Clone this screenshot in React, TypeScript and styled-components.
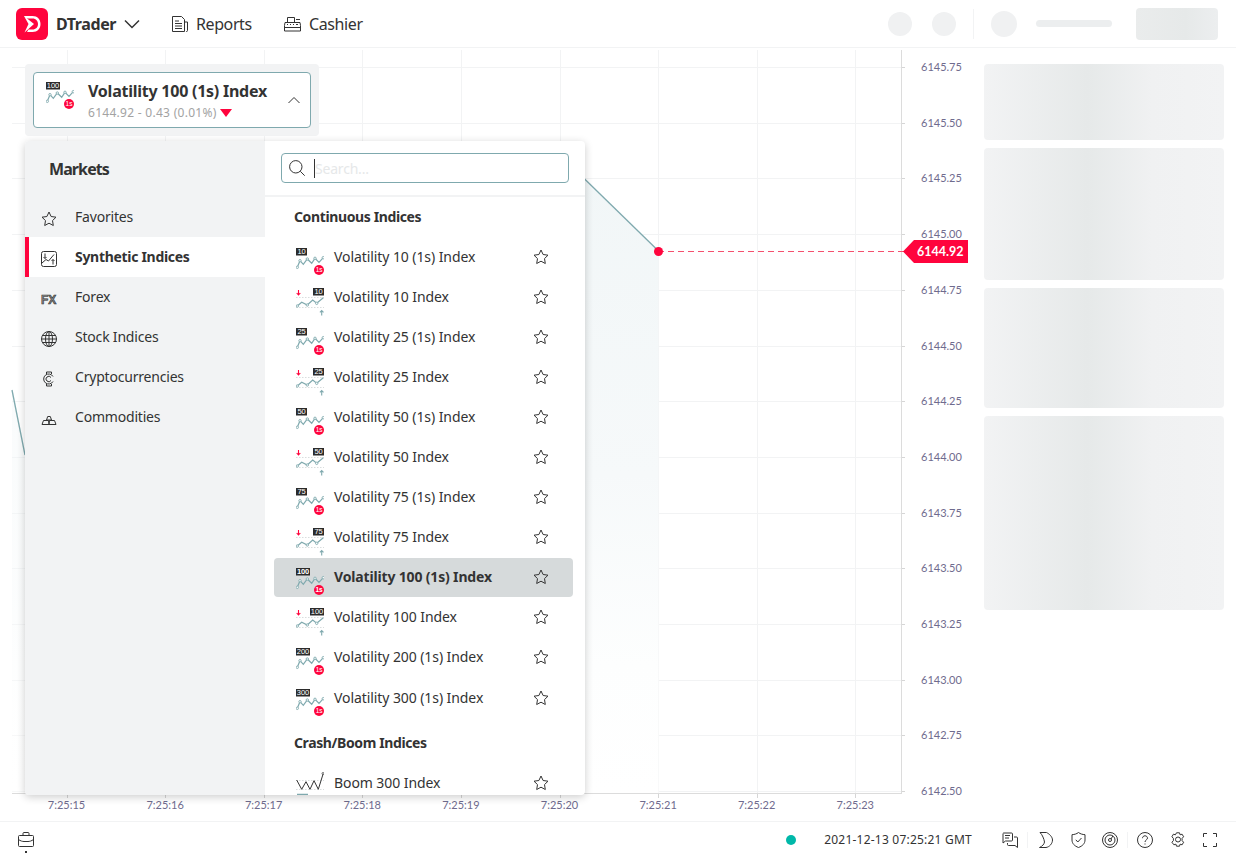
import { type ReactElement } from 'react';
import styled, { createGlobalStyle } from 'styled-components';

const RED = '#ff043d';
const TEAL = '#7fa9ae';
const INK = '#333333';
const FONT = '"Noto Sans", "Liberation Sans", sans-serif';

const GlobalStyle = createGlobalStyle`
  html, body {
    margin: 0;
    padding: 0;
    background: #fff;
    color: ${INK};
    font-family: ${FONT};
  }
  * { box-sizing: border-box; }
`;

const Page = styled.div`
  width: 1236px;
  height: 857px;
  display: flex;
  flex-direction: column;
  overflow: hidden;
`;

const Header = styled.header`
  height: 48px;
  flex: none;
  display: flex;
  align-items: center;
  padding: 0 18px 0 16px;
  border-bottom: 1px solid #f2f3f4;
`;

const Brand = styled.div`
  display: flex;
  align-items: center;
  width: 156px;
  font-size: 16px;
  font-weight: 700;
  letter-spacing: -0.4px;
  gap: 8px;
`;

const NavLink = styled.div<{ $width: number }>`
  display: flex;
  align-items: center;
  gap: 8px;
  width: ${(p) => p.$width}px;
  font-size: 16px;
  letter-spacing: -0.4px;
`;

const HeaderRight = styled.div`
  margin-left: auto;
  display: flex;
  align-items: center;
`;

const SkeletonDot = styled.div<{ $size: number; $gap: number }>`
  width: ${(p) => p.$size}px;
  height: ${(p) => p.$size}px;
  margin-right: ${(p) => p.$gap}px;
  border-radius: 50%;
  background: #f0f1f2;
`;

const HeaderDivider = styled.div`
  width: 1px;
  height: 30px;
  margin-right: 17px;
  background: #f2f3f4;
`;

const SkeletonBar = styled.div`
  width: 76px;
  height: 7px;
  margin-right: 24px;
  border-radius: 4px;
  background: #eceeef;
`;

const SkeletonButton = styled.div`
  width: 82px;
  height: 32px;
  border-radius: 4px;
  background: linear-gradient(90deg, #eaecec 0%, #e6e9e9 60%, #eceeef 100%);
`;

const Main = styled.main`
  flex: 1;
  min-height: 0;
  display: flex;
`;

const ChartArea = styled.section`
  position: relative;
  width: 968px;
  flex: none;
`;

const ChartSvg = styled.svg`
  display: block;
  font-family: Lato, "Liberation Sans", sans-serif;
`;

const Side = styled.aside`
  flex: 1;
  display: flex;
  flex-direction: column;
  gap: 8px;
  padding: 16px 12px 0 16px;
`;

const SkeletonCard = styled.div<{ $height: number }>`
  height: ${(p) => p.$height}px;
  border-radius: 4px;
  background: linear-gradient(90deg, #f2f3f4 0%, #e6e9e9 43%, #f0f1f2 70%, #f2f3f4 100%);
`;

const Selector = styled.div`
  position: absolute;
  left: 25px;
  top: 16px;
  width: 294px;
  height: 72px;
  padding: 8px;
  border-radius: 4px;
  background: #f2f3f4;
`;

const SelectorBox = styled.div`
  height: 56px;
  display: flex;
  align-items: flex-start;
  gap: 14px;
  padding: 0 10px 0 12px;
  background: #fff;
  border: 1px solid ${TEAL};
  border-radius: 4px;

  & > svg:first-child {
    margin-top: -1px;
  }
`;

const SelectorText = styled.div`
  margin-top: 6px;
`;

const SelectorTitle = styled.div`
  font-size: 16px;
  line-height: 24px;
  font-weight: 700;
  letter-spacing: -0.24px;
  white-space: nowrap;
`;

const SelectorSub = styled.div`
  display: flex;
  align-items: center;
  gap: 3px;
  margin-top: 1px;
  font-size: 12px;
  line-height: 18px;
  letter-spacing: 0.28px;
  color: #a3a3a3;
`;

const DownTriangle = styled.span`
  width: 0;
  height: 0;
  border-left: 6px solid transparent;
  border-right: 6px solid transparent;
  border-top: 8px solid ${RED};
`;

const Chevron = styled.svg`
  margin-left: auto;
  align-self: center;
`;

const Menu = styled.div`
  position: absolute;
  left: 25px;
  top: 93px;
  width: 560px;
  height: 654px;
  display: flex;
  border-radius: 4px;
  overflow: hidden;
  background: #fff;
  box-shadow: 0 2px 8px rgba(0, 0, 0, 0.2);
`;

const Sidebar = styled.nav`
  width: 240px;
  flex: none;
  background: #f2f3f4;
`;

const SidebarTitle = styled.div`
  height: 56px;
  padding: 16px 24px 0;
  font-size: 16px;
  line-height: 24px;
  font-weight: 700;
  letter-spacing: -0.9px;
`;

const SidebarItem = styled.div<{ $active?: boolean }>`
  height: 40px;
  display: flex;
  align-items: center;
  gap: 18px;
  padding-bottom: 1px;
  padding-left: ${(p) => (p.$active ? 12 : 16)}px;
  font-size: 14px;
  font-weight: ${(p) => (p.$active ? 700 : 400)};
  letter-spacing: ${(p) => (p.$active ? -0.3 : -0.2)}px;
  background: ${(p) => (p.$active ? '#fff' : 'transparent')};
  border-left: ${(p) => (p.$active ? `4px solid ${RED}` : 'none')};

  & > svg {
    margin-top: 4px;
  }
`;

const ListPanel = styled.div`
  flex: 1;
  min-width: 0;
  display: flex;
  flex-direction: column;
`;

const SearchWrap = styled.div`
  flex: none;
  padding: 12px 16px;
  border-bottom: 2px solid #f2f3f4;
`;

const SearchBox = styled.div`
  height: 30px;
  display: flex;
  align-items: center;
  gap: 9px;
  padding-left: 7px;
  border: 1px solid ${TEAL};
  border-radius: 4px;
`;

const Caret = styled.span`
  width: 1px;
  height: 19px;
  background: ${INK};
`;

const Placeholder = styled.span`
  margin-left: -9px;
  font-size: 14px;
  letter-spacing: -0.2px;
  color: #e6e8e9;
`;

const List = styled.div`
  flex: 1;
  min-height: 0;
  overflow: hidden;
  padding-left: 9px;
`;

const GroupTitle = styled.div<{ $top?: number; $height: number }>`
  height: ${(p) => p.$height}px;
  margin-top: ${(p) => p.$top ?? 0}px;
  padding-left: 20px;
  font-size: 14px;
  line-height: 40px;
  font-weight: 700;
  letter-spacing: -0.38px;
`;

const Row = styled.div<{ $selected?: boolean; $nudge?: boolean }>`
  width: 299px;
  height: 39px;
  margin-bottom: 1px;
  margin-top: ${(p) => (p.$nudge ? 2 : 0)}px;
  display: flex;
  align-items: center;
  gap: 10px;
  padding-left: 22px;
  padding-bottom: 2px;
  font-size: 14px;
  font-weight: ${(p) => (p.$selected ? 700 : 400)};
  letter-spacing: ${(p) => (p.$selected ? -0.16 : -0.08)}px;
  border-radius: 4px;
  background: ${(p) => (p.$selected ? '#d6dadb' : 'transparent')};
`;

const RowLabel = styled.span`
  flex: 1;
  white-space: nowrap;
`;

const RowStar = styled.svg`
  flex: none;
  margin-right: 24px;
`;

const Footer = styled.footer`
  height: 36px;
  flex: none;
  display: flex;
  align-items: center;
  padding: 0 19px 0 18px;
  border-top: 1px solid #f2f3f4;
`;

const FooterLeft = styled.div`
  position: relative;
  display: flex;
`;

const Pip = styled.span`
  position: absolute;
  left: 7px;
  top: 19px;
  width: 2px;
  height: 2px;
  background: ${INK};
`;

const Status = styled.div`
  margin-left: auto;
  display: flex;
  align-items: center;
  gap: 28px;
  margin-right: 30px;
  font-size: 12px;
  letter-spacing: 0.22px;
`;

const StatusDot = styled.span`
  width: 10px;
  height: 10px;
  border-radius: 50%;
  background: #00b8a9;
`;

const FooterIcons = styled.div`
  display: flex;
  align-items: center;
`;

const FooterIcon = styled.svg<{ $gap: number }>`
  margin-right: ${(p) => p.$gap}px;
`;

const FooterDivider = styled.span<{ $gap: number }>`
  width: 1px;
  height: 16px;
  margin-right: ${(p) => p.$gap}px;
  background: #f2f3f4;
`;

function StarIcon(): ReactElement {
  return (
    <RowStar width='16' height='16' viewBox='0 0 16 16' fill='none' stroke={INK} strokeWidth='1'>
      <path d='M8 1l2.100 4.500 4.900.7-3.500 3.400.8 4.900L8 12.200l-4.300 2.300.8-4.900L1 6.200l4.900-.7z' strokeLinejoin='round' />
    </RowStar>
  );
}

function MarketIcon({ label, fast }: { label: string; fast: boolean }): ReactElement {
  const wide = label.length > 2;
  const boxW = wide ? 14 : 11;
  const labelFont = '"Liberation Sans", sans-serif';
  if (fast) {
    const pts: number[][] = [[1.3, 29.3], [4, 22.7], [7.3, 26.3], [11.3, 21], [15.7, 25.3], [19, 20.3], [23, 24.3], [27.3, 19.7]];
    return (
      <svg width='28' height='38' viewBox='0 0 28 38' fill='none'>
        <rect x='0' y='10' width={boxW} height='7.500' fill='#2b2b2b' />
        <text x={boxW / 2} y='16.200' textAnchor='middle' fontSize='7.500' fill='#fff' fontFamily={labelFont}>{label}</text>
        <polyline points={pts.map((p) => p.join(',')).join(' ')} stroke={TEAL} strokeWidth='1.200' />
        {pts.filter((_, i) => i === 0 || i % 2 === 1).map((p) => (
          <circle key={p[0]} cx={p[0]} cy={p[1]} r='1.200' fill='#fff' stroke={TEAL} strokeWidth='0.900' />
        ))}
        <circle cx='23' cy='32' r='5' fill={RED} />
        <text x='23' y='34.400' textAnchor='middle' fontSize='6.500' fill='#fff' fontFamily={labelFont}>1s</text>
      </svg>
    );
  }
  const pts: number[][] = [[1.3, 28], [5.7, 24.3], [11.3, 27], [16.7, 22], [20.7, 25.3], [27.3, 19.7]];
  return (
    <svg width='28' height='38' viewBox='0 0 28 38' fill='none'>
      <rect x={28 - boxW} y='10' width={boxW} height='7.500' fill='#2b2b2b' />
      <text x={28 - boxW / 2} y='16.200' textAnchor='middle' fontSize='7.500' fill='#fff' fontFamily={labelFont}>{label}</text>
      <path d='M2.500 12v5M.7 15l1.800 2 1.800-2' stroke={RED} strokeWidth='1.100' />
      <path d='M0 19.500h28M0 29.500h28' stroke='#c8cfd0' strokeWidth='0.700' strokeDasharray='1.500 1.500' />
      <polyline points={pts.map((p) => p.join(',')).join(' ')} stroke={TEAL} strokeWidth='1.200' />
      {pts.filter((_, i) => i % 2 === 0).map((p) => (
        <circle key={p[0]} cx={p[0]} cy={p[1]} r='1.200' fill='#fff' stroke={TEAL} strokeWidth='0.900' />
      ))}
      <path d='M25.700 32.500v5M23.900 34.300l1.800-1.800 1.800 1.800' stroke={TEAL} strokeWidth='1.100' />
    </svg>
  );
}

function BoomIcon(): ReactElement {
  return (
    <svg width='28' height='38' viewBox='0 0 28 38' fill='none'>
      <path d='M0 16.500h28M0 25.500h28' stroke='#c8cfd0' strokeWidth='0.700' strokeDasharray='1.500 1.500' />
      <polyline points='.7,16 5.700,25.300 10,17.700 14,25.300 18,16.700 22.300,25.300 27.300,9.300' stroke={INK} strokeWidth='1' />
      <circle cx='27' cy='9.500' r='1' fill='#fff' stroke={INK} strokeWidth='0.700' />
      <path d='M1 30.500h11' stroke={TEAL} strokeWidth='1.500' />
    </svg>
  );
}

const markets: { label: string; name: string; fast: boolean; selected?: boolean }[] = [
  { label: '10', name: 'Volatility 10 (1s) Index', fast: true },
  { label: '10', name: 'Volatility 10 Index', fast: false },
  { label: '25', name: 'Volatility 25 (1s) Index', fast: true },
  { label: '25', name: 'Volatility 25 Index', fast: false },
  { label: '50', name: 'Volatility 50 (1s) Index', fast: true },
  { label: '50', name: 'Volatility 50 Index', fast: false },
  { label: '75', name: 'Volatility 75 (1s) Index', fast: true },
  { label: '75', name: 'Volatility 75 Index', fast: false },
  { label: '100', name: 'Volatility 100 (1s) Index', fast: true, selected: true },
  { label: '100', name: 'Volatility 100 Index', fast: false },
  { label: '200', name: 'Volatility 200 (1s) Index', fast: true },
  { label: '300', name: 'Volatility 300 (1s) Index', fast: true },
];

const priceLabels = ['6145.75', '6145.50', '6145.25', '6145.00', '6144.75', '6144.50', '6144.25', '6144.00', '6143.75', '6143.50', '6143.25', '6143.00', '6142.75', '6142.50'];
const timeLabels = ['7:25:15', '7:25:16', '7:25:17', '7:25:18', '7:25:19', '7:25:20', '7:25:21', '7:25:22', '7:25:23'];

function Chart(): ReactElement {
  return (
    <ChartSvg width='968' height='773' viewBox='0 48 968 773' fill='none'>
      <defs>
        <linearGradient id='area' x1='0' y1='0' x2='0' y2='1'>
          <stop offset='0' stopColor='#f1f6f7' />
          <stop offset='0.5' stopColor='#f6f9fa' />
          <stop offset='0.8' stopColor='#fdfefe' />
          <stop offset='1' stopColor='#ffffff' />
        </linearGradient>
      </defs>
      {priceLabels.map((t, i) => {
        const y = 67 + i * 55.7;
        return (
          <g key={t}>
            <path d={`M12 ${Math.round(y) + 0.5}H905`} stroke='#f2f3f4' />
            <path d={`M901 ${Math.round(y) + 0.5}H905`} stroke='#d6d6d6' />
            <text x='921' y={y + 4} fontSize='11' fill='#6f6b8e'>{t}</text>
          </g>
        );
      })}
      {timeLabels.map((t, i) => {
        const x = 66.5 + i * 98.6;
        return (
          <g key={t}>
            <path d={`M${Math.round(x) + 0.5} 50V793`} stroke='#f2f3f4' />
            <path d={`M${Math.round(x) + 0.5} 794V798`} stroke='#d6d6d6' />
            <text x={x} y='809' fontSize='11' fill='#6f6b8e' textAnchor='middle'>{t}</text>
          </g>
        );
      })}
      <path d='M560 155L658.500 251V793H560z' fill='url(#area)' />
      <path d='M12 390L25 455V793H12z' fill='url(#area)' opacity='0.4' />
      <path d='M560 155L658.500 251' stroke={TEAL} strokeWidth='1.300' />
      <path d='M12 390L25 455' stroke={TEAL} strokeWidth='1.300' />
      <path d='M901.500 50V794M12 793.500H902' stroke='#dcdcdc' />
      <path d='M658 251.500H905' stroke='#f4506e' strokeDasharray='6 4' />
      <circle cx='658.500' cy='251.500' r='4.500' fill={RED} />
      <polygon points='903,251.500 914,240 968,240 968,263 914,263' fill={RED} />
      <text x='917' y='256' fontSize='12.500' fontWeight='700' fill='#fff'>6144.92</text>
    </ChartSvg>
  );
}

function App(): ReactElement {
  return (
    <Page>
      <GlobalStyle />
      <Header>
        <Brand>
          <svg width='32' height='32' viewBox='0 0 32 32'>
            <rect width='32' height='32' rx='6' fill={RED} />
            <path d='M8 8h8.500c5 0 8 3.500 8 8s-3 8-8 8H11l1.500-2.500h4c3.500 0 5.500-2.500 5.500-5.500s-2-5.500-5.500-5.500H10z' fill='#fff' />
            <path d='M8 8l10 8-9.500 8.500L12.500 16z' fill='#fff' />
          </svg>
          DTrader
          <svg width='16' height='16' viewBox='0 0 16 16' fill='none' stroke={INK} strokeWidth='1.500'>
            <path d='M1 4.500l7 7 7-7' />
          </svg>
        </Brand>
        <NavLink $width={112}>
          <svg width='16' height='16' viewBox='0 0 16 16' fill='none' stroke={INK} strokeWidth='1'>
            <path d='M.5.500h9l3 3v12h-12zM12.500 6h3v8.500a1 1 0 0 1-1.500 1M3 5h4M3 7.500h7M3 10h7M3 12.500h7' />
          </svg>
          Reports
        </NavLink>
        <NavLink $width={90}>
          <svg width='17' height='16' viewBox='0 0 17 16' fill='none' stroke={INK} strokeWidth='1'>
            <path d='M1 6.500h15l.5 3v5.500H.5V9.500zM3.500 6.500V1.500h7v5M12 3.500h4M.5 11.500h16M3 8.500h1M6 8.500h1M9 8.500h1M12 8.500h2' />
          </svg>
          Cashier
        </NavLink>
        <HeaderRight>
          <SkeletonDot $size={24} $gap={20} />
          <SkeletonDot $size={24} $gap={17} />
          <HeaderDivider />
          <SkeletonDot $size={26} $gap={19} />
          <SkeletonBar />
          <SkeletonButton />
        </HeaderRight>
      </Header>
      <Main>
        <ChartArea>
          <Chart />
          <Selector>
            <SelectorBox>
              <MarketIcon label='100' fast />
              <SelectorText>
                <SelectorTitle>Volatility 100 (1s) Index</SelectorTitle>
                <SelectorSub>6144.92 - 0.43 (0.01%) <DownTriangle /></SelectorSub>
              </SelectorText>
              <Chevron width='12' height='8' viewBox='0 0 12 8' fill='none' stroke={INK} strokeWidth='1'>
                <path d='M.5 7l5.500-5.500 5.500 5.500' />
              </Chevron>
            </SelectorBox>
          </Selector>
          <Menu>
            <Sidebar>
              <SidebarTitle>Markets</SidebarTitle>
              <SidebarItem>
                <svg width='16' height='16' viewBox='0 0 16 16' fill='none' stroke={INK} strokeWidth='1'>
                  <path d='M8 1l2.100 4.500 4.900.7-3.500 3.400.8 4.900L8 12.200l-4.300 2.300.8-4.900L1 6.200l4.900-.7z' strokeLinejoin='round' />
                </svg>
                Favorites
              </SidebarItem>
              <SidebarItem $active>
                <svg width='16' height='16' viewBox='0 0 16 16' fill='none' stroke={INK} strokeWidth='1'>
                  <rect x='.5' y='.5' width='15' height='15' rx='2' />
                  <path d='M1 12l4-3.500 2.500 1.500L13 3.500M4 2.500v5M2.500 6L4 7.500 5.500 6M12 13.500v-5M10.500 10L12 8.500l1.500 1.500' />
                </svg>
                Synthetic Indices
              </SidebarItem>
              <SidebarItem>
                <svg width='16' height='16' viewBox='0 0 16 16'>
                  <text x='0' y='13' fontSize='12' fontWeight='700' fill='#8c8c8c' stroke={INK} strokeWidth='0.600' fontFamily='"Liberation Sans", sans-serif'>FX</text>
                </svg>
                Forex
              </SidebarItem>
              <SidebarItem>
                <svg width='16' height='16' viewBox='0 0 16 16' fill='none' stroke={INK} strokeWidth='1'>
                  <circle cx='8' cy='8' r='7.500' />
                  <ellipse cx='8' cy='8' rx='3.500' ry='7.500' />
                  <path d='M8 .5v15M.5 8h15M1.500 4.500h13M1.500 11.500h13' />
                </svg>
                Stock Indices
              </SidebarItem>
              <SidebarItem>
                <svg width='16' height='16' viewBox='0 0 16 16' fill='none' stroke={INK} strokeWidth='1'>
                  <path d='M12 5.500A5 5 0 1 0 12 10.500M10 6.500A2.700 2.700 0 1 0 10 9.500M5.500 3V1h5v2M5.500 13v2h5v-2' />
                </svg>
                Cryptocurrencies
              </SidebarItem>
              <SidebarItem>
                <svg width='16' height='16' viewBox='0 0 16 16' fill='none' stroke={INK} strokeWidth='1'>
                  <path d='M5.500 9l1.200-3.500h2.600L10.500 9zM1 13.500L2.500 9.500H7.500L8 13.500zM8 13.500l.5-4h5l1.500 4z' strokeLinejoin='round' />
                </svg>
                Commodities
              </SidebarItem>
            </Sidebar>
            <ListPanel>
              <SearchWrap>
                <SearchBox>
                  <svg width='16' height='16' viewBox='0 0 16 16' fill='none' stroke={INK} strokeWidth='1'>
                    <circle cx='6.800' cy='6.800' r='6.200' />
                    <path d='M11.300 11.300L15.700 15.700' />
                  </svg>
                  <Caret />
                  <Placeholder>Search...</Placeholder>
                </SearchBox>
              </SearchWrap>
              <List>
                <GroupTitle $height={41}>Continuous Indices</GroupTitle>
                {markets.map((m, i) => (
                  <Row key={m.name} $selected={m.selected} $nudge={i === markets.length - 1}>
                    <MarketIcon label={m.label} fast={m.fast} />
                    <RowLabel>{m.name}</RowLabel>
                    <StarIcon />
                  </Row>
                ))}
                <GroupTitle $top={5} $height={41}>Crash/Boom Indices</GroupTitle>
                <Row>
                  <BoomIcon />
                  <RowLabel>Boom 300 Index</RowLabel>
                  <StarIcon />
                </Row>
              </List>
            </ListPanel>
          </Menu>
        </ChartArea>
        <Side>
          <SkeletonCard $height={76} />
          <SkeletonCard $height={132} />
          <SkeletonCard $height={120} />
          <SkeletonCard $height={194} />
        </Side>
      </Main>
      <Footer>
        <FooterLeft>
          <svg width='16' height='16' viewBox='0 0 16 16' fill='none' stroke={INK} strokeWidth='1'>
            <path d='M1.500 3.500h13a1 1 0 0 1 1 1v9a1 1 0 0 1-1 1h-13a1 1 0 0 1-1-1v-9a1 1 0 0 1 1-1zM5 3.500v-2a1 1 0 0 1 1-1h4a1 1 0 0 1 1 1v2M.5 7.500c2 1.500 4 2 5.500 2M10 9.500c1.500 0 3.500-.5 5.500-2M6 9.500h4' />
          </svg>
          <Pip />
        </FooterLeft>
        <Status>
          <StatusDot />
          2021-12-13 07:25:21 GMT
        </Status>
        <FooterIcons>
          <FooterIcon $gap={9} width='16' height='16' viewBox='0 0 16 16' fill='none' stroke={INK} strokeWidth='1'>
            <path d='M1.500 1h8a1 1 0 0 1 1 1v6a1 1 0 0 1-1 1h-6L1 11V2a1 1 0 0 1 .5-1zM3 3.500h5M3 6h4M12 5h2.500a1 1 0 0 1 1 1v9.500l-2.500-2H6.500a1 1 0 0 1-1-1V11' />
          </FooterIcon>
          <FooterDivider $gap={11} />
          <FooterIcon $gap={18} width='14' height='16' viewBox='0 0 14 16' fill='none' stroke={INK} strokeWidth='1'>
            <path d='M1 .5h6.500c3 1.500 6 4.500 6 7.500 0 3.500-3 7-6.500 7.500H.5c3-1.500 4.500-3 5-5.500C5 7 3.500 3 1 .5z' strokeLinejoin='round' />
          </FooterIcon>
          <FooterIcon $gap={16} width='15' height='16' viewBox='0 0 15 16' fill='none' stroke={INK} strokeWidth='1'>
            <path d='M7.500.5c2 1.500 4 2 6.500 2.200v5.300c0 3.500-2.500 6-6.500 7.500C3.500 14 1 11.500 1 8V2.700C3.500 2.500 5.500 2 7.500.5z' />
            <path d='M4.800 7.800L6.800 10l3.700-4' />
          </FooterIcon>
          <FooterIcon $gap={9} width='16' height='16' viewBox='0 0 16 16' fill='none' stroke={INK} strokeWidth='1'>
            <circle cx='8' cy='8' r='7.500' />
            <circle cx='8' cy='8' r='5' />
            <circle cx='8' cy='8' r='1.500' />
            <path d='M9 7l1.800-3' />
          </FooterIcon>
          <FooterDivider $gap={9} />
          <FooterIcon $gap={18} width='16' height='16' viewBox='0 0 16 16' fill='none' stroke={INK} strokeWidth='1'>
            <circle cx='8' cy='8' r='7.500' />
            <path d='M5.500 6.200C5.500 4.800 6.600 3.800 8 3.800s2.500 1 2.500 2.300c0 1.700-2.500 1.900-2.500 3.900M8 11.500v1' />
          </FooterIcon>
          <FooterIcon $gap={18} width='14' height='16' viewBox='0 0 14 16' fill='none' stroke={INK} strokeWidth='1'>
            <path d='M5.500.8h3l.6 2 2-.6 1.500 2.600-1.500 1.500v2.400l1.500 1.500-1.500 2.600-2-.6-.6 2h-3l-.6-2-2 .6L.9 10.200l1.500-1.500V6.300L.9 4.800l1.500-2.600 2 .6z' strokeLinejoin='round' />
            <circle cx='7' cy='7.500' r='2.500' />
          </FooterIcon>
          <FooterIcon $gap={0} width='14' height='14' viewBox='0 0 14 14' fill='none' stroke={INK} strokeWidth='1'>
            <path d='M.5 4V.5H4M10 .5h3.500V4M13.500 10v3.500H10M4 13.500H.5V10' />
          </FooterIcon>
        </FooterIcons>
      </Footer>
    </Page>
  );
}

export default App;
